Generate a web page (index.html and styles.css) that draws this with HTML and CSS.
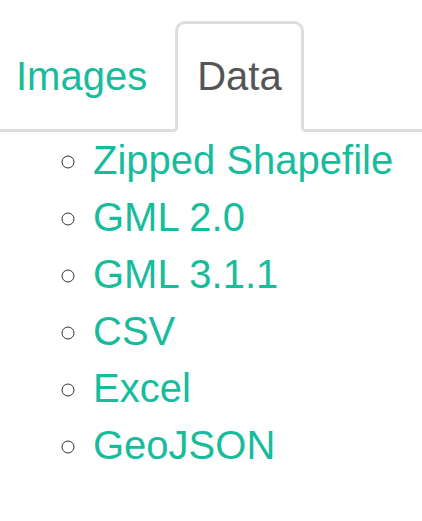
FILE: index.html
```html
<!DOCTYPE html>
<html>
<head>
<meta charset="utf-8">
<link rel="stylesheet" href="styles.css">
</head>
<body>
<ul class="tabs">
  <li class="tab"><a href="#" class="tab-link">Images</a></li>
  <li class="tab active"><a href="#" class="tab-link">Data</a></li>
</ul>
<div class="tab-content">
  <ul class="formats">
    <li><a href="#">Zipped Shapefile</a></li>
    <li><a href="#">GML 2.0</a></li>
    <li><a href="#">GML 3.1.1</a></li>
    <li><a href="#">CSV</a></li>
    <li><a href="#">Excel</a></li>
    <li><a href="#">GeoJSON</a></li>
  </ul>
</div>
</body>
</html>
```

FILE: styles.css
```css
html, body {
  margin: 0;
  padding: 0;
  background: #fff;
}
body {
  font-family: "Liberation Sans", Arial, sans-serif;
  font-size: 40px;
  line-height: 57px;
  color: #555;
}
a {
  color: #18bc9c;
  text-decoration: none;
}
.tabs {
  list-style: none;
  display: flex;
  margin: 21px 0 0 -6px;
  padding: 0;
  border-bottom: 3px solid #ddd;
}
.tab {
  margin-bottom: -3px;
  margin-right: 6px;
}
.tab-link {
  display: block;
  padding: 24px 19px;
  border: 3px solid transparent;
  border-radius: 10px 10px 0 0;
}
.tab.active .tab-link {
  color: #555;
  background: #fff;
  border-color: #ddd;
  border-bottom-color: transparent;
}
.tab-content {
  margin: 0;
}
.formats {
  list-style: circle;
  margin: 0;
  padding-left: 93px;
}
.formats li::marker {
  color: #333;
}
```
